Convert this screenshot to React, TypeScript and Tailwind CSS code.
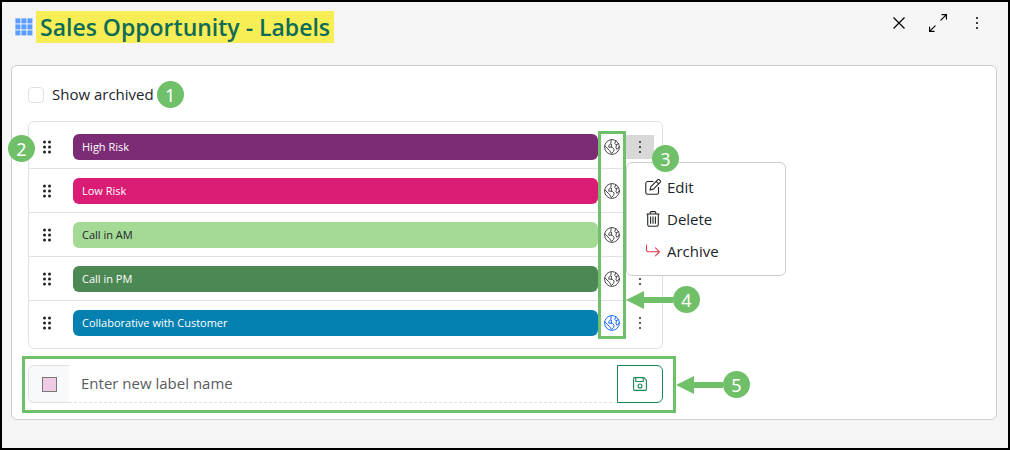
import { useState } from 'react'
import { BsArrowReturnRight, BsArrowsAngleExpand } from 'react-icons/bs'

const labels = [
  { name: 'High Risk', color: 'bg-[#7c2b75] text-white', shared: false },
  { name: 'Low Risk', color: 'bg-[#db1c74] text-white', shared: false },
  { name: 'Call in AM', color: 'bg-[#a5d996] text-[#212529]', shared: false },
  { name: 'Call in PM', color: 'bg-[#4b8854] text-white', shared: false },
  { name: 'Collaborative with Customer', color: 'bg-[#0481b1] text-white', shared: true },
]

function GridIcon() {
  return (
    <svg className="h-[18px] w-[18px] text-[#5a9dff]" viewBox="0 0 18 18" fill="currentColor">
      {[0, 6, 12].map((y) => [0, 6, 12].map((x) => (
        <rect key={`${x}-${y}`} x={x + 0.4} y={y + 0.4} width="5" height="5" />
      )))}
    </svg>
  )
}

function CloseIcon() {
  return (
    <svg className="h-3 w-3" viewBox="0 0 12 12" fill="none" stroke="currentColor" strokeWidth={1.2}>
      <path d="M.5.5l11 11M11.5.5l-11 11" />
    </svg>
  )
}

function DotsIcon() {
  return (
    <svg className="h-4 w-4" viewBox="0 0 16 16" fill="currentColor">
      <circle cx="8" cy="3" r="1" />
      <circle cx="8" cy="8" r="1" />
      <circle cx="8" cy="13" r="1" />
    </svg>
  )
}

function GlobeIcon({ className }: { className: string }) {
  return (
    <svg className={className} viewBox="0 0 16 16" fill="none" stroke="currentColor" strokeWidth={1} strokeLinecap="round" strokeLinejoin="round">
      <circle cx="8" cy="8" r="7.4" />
      <path d="M7 1v3.6L4.8 6.4v1.8h3.4l2 2-.6 2.2-2.2 2.2-1.6-2.8L1 7" />
      <path d="M7.4 5.4v2.8M11.8 2 10.6 4.4 12 5.6l2.6-.8M15 8.2l-2 2.2-1-1.6.4-3" />
    </svg>
  )
}

function GripIcon() {
  return (
    <svg className="h-4 w-4" viewBox="0 0 16 16" fill="currentColor">
      {[3, 8, 13].map((y) => (
        <g key={y}>
          <circle cx="5.5" cy={y} r="1.5" />
          <circle cx="10.5" cy={y} r="1.5" />
        </g>
      ))}
    </svg>
  )
}

function EditIcon() {
  return (
    <svg className="h-4 w-4" viewBox="0 0 16 16" fill="none" stroke="currentColor" strokeWidth={1.1} strokeLinejoin="round">
      <path d="M8.5 2.5h-6A1.8 1.8 0 0 0 .8 4.3v9.2a1.8 1.8 0 0 0 1.7 1.8h9.3a1.8 1.8 0 0 0 1.7-1.8V8" />
      <path d="M5 11l.9-3.4L12.7.8a1.2 1.2 0 0 1 1.7 0l.8.8a1.2 1.2 0 0 1 0 1.7L8.4 10.1 5 11zM11.2 2.3l2.5 2.5" />
    </svg>
  )
}

function TrashIcon() {
  return (
    <svg className="h-4 w-4" viewBox="0 0 16 16" fill="none" stroke="currentColor" strokeWidth={1.1}>
      <path d="M1.5 3h13M5.2 3V1.6a1 1 0 0 1 1-1h3.6a1 1 0 0 1 1 1V3M2.7 3v10.6a1.7 1.7 0 0 0 1.7 1.7h7.2a1.7 1.7 0 0 0 1.7-1.7V3M5.6 5.5v7.3M8 5.5v7.3M10.4 5.5v7.3" />
    </svg>
  )
}

function SaveIcon() {
  return (
    <svg className="h-3.5 w-3.5" viewBox="0 0 14 14" fill="none" stroke="currentColor" strokeWidth={1.1} strokeLinejoin="round">
      <path d="M1.5.6h9.3l2.6 2.6v9.3a.9.9 0 0 1-.9.9h-11a.9.9 0 0 1-.9-.9v-11a.9.9 0 0 1 .9-.9z" />
      <path d="M2.8.6v3.9h7.4V.6" />
      <circle cx="7" cy="9" r="2" />
    </svg>
  )
}

function Badge({ n }: { n: number }) {
  return (
    <span className="flex h-[27px] w-[27px] shrink-0 items-center justify-center rounded-full bg-[#6fc069] font-['Noto_Sans',sans-serif] text-[18px] leading-none text-white">
      {n}
    </span>
  )
}

function Callout({ n }: { n: number }) {
  return (
    <div className="flex items-center">
      <svg className="h-[18px] w-[47px]" viewBox="0 0 47 18" fill="#6fc069">
        <path d="M0 9 18 0v6h29v6H18v6z" />
      </svg>
      <Badge n={n} />
    </div>
  )
}

export default function App() {
  const [archived, setArchived] = useState(false)
  const [name, setName] = useState('')

  return (
    <div className="min-h-screen border-2 border-black bg-[#f5f5f5] px-[9px] pb-7 font-['Open_Sans',sans-serif] text-[15px] text-[#212529]">
      <header className="flex h-[63px] items-start justify-between pt-[9px] pr-3 pl-1">
        <div className="flex items-center">
          <GridIcon />
          <h1 className="ml-[3px] bg-[#f7ee55] px-1 text-[23px] leading-8 font-semibold text-[#0d6b57]">
            Sales Opportunity - Labels
          </h1>
        </div>
        <div className="flex items-center gap-[19px] pt-0.5 text-black">
          <button aria-label="Close" className="flex h-5 w-5 items-center justify-center">
            <CloseIcon />
          </button>
          <button aria-label="Expand" className="flex h-5 w-5 items-center justify-center">
            <BsArrowsAngleExpand className="h-[18px] w-[18px]" />
          </button>
          <button aria-label="More" className="flex h-5 w-5 items-center justify-center">
            <DotsIcon />
          </button>
        </div>
      </header>

      <main className="mr-0.5 rounded-md border border-[#ccc] bg-white p-4 pt-[15px]">
        <div className="flex items-center">
          <input
            id="archived"
            type="checkbox"
            checked={archived}
            onChange={(e) => setArchived(e.target.checked)}
            className="h-4 w-4 appearance-none rounded border border-[#dee2e6] bg-white checked:bg-[#198754]"
          />
          <label htmlFor="archived" className="mr-[3px] ml-2">Show archived</label>
          <Badge n={1} />
        </div>

        <div className="relative mt-[13px] w-full max-w-[635px]">
          <ul className="rounded-md border border-[#dee2e6] py-[3px]">
            {labels.map((label) => (
              <li key={label.name} className="flex h-11 items-center border-b border-[#dee2e6] pr-2 pl-2.5 last:border-b-0">
                <button aria-label="Move" className="flex w-4 justify-center">
                  <GripIcon />
                </button>
                <span className={`ml-[18px] h-[26px] flex-1 rounded-md px-[9px] text-[11px] leading-[26px] ${label.color}`}>
                  {label.name}
                </span>
                <span className="flex w-7 justify-center">
                  <GlobeIcon className={label.shared ? 'h-4 w-4 text-[#1a6dff]' : 'h-4 w-4 text-[#4a4a4a]'} />
                </span>
                <button
                  aria-label={`Actions for ${label.name}`}
                  className={label.name === 'High Risk' ? 'flex h-6 w-7 items-center justify-center bg-[#d8d8d8]' : 'flex h-6 w-7 items-center justify-center'}
                >
                  <DotsIcon />
                </button>
              </li>
            ))}
          </ul>

          <div className="absolute top-2.5 right-[37px] h-[208px] w-7 border-3 border-[#6fc069]" />

          <div className="absolute top-[41px] left-full -ml-[37px] w-40 rounded-md border border-[#ccc] bg-white py-2">
            <button className="flex h-8 w-full items-center gap-[6px] px-[18px]">
              <EditIcon />
              Edit
            </button>
            <button className="flex h-8 w-full items-center gap-[6px] px-[18px]">
              <TrashIcon />
              Delete
            </button>
            <button className="flex h-8 w-full items-center gap-[6px] px-[18px]">
              <BsArrowReturnRight className="h-4 w-4 text-[#dc3545]" />
              Archive
            </button>
          </div>

          <div className="absolute top-3.5 -left-5">
            <Badge n={2} />
          </div>
          <div className="absolute top-6 left-full -ml-[11px]">
            <Badge n={3} />
          </div>
          <div className="absolute top-[165px] left-full -ml-[37px]">
            <Callout n={4} />
          </div>
        </div>

        <div className="relative mt-4 w-full max-w-[635px]">
          <form className="flex h-[38px]" onSubmit={(e) => e.preventDefault()}>
            <div className="flex w-[41px] items-center justify-center rounded-l-md border border-r-0 border-[#dee2e6] bg-[#f8f9fa]">
              <button type="button" aria-label="Label colour" className="h-[15px] w-[15px] border border-[#777] bg-[#efcbe4]" />
            </div>
            <input
              aria-label="Label name"
              placeholder="Enter new label name"
              value={name}
              onChange={(e) => setName(e.target.value)}
              className="min-w-0 flex-1 border-b border-dashed border-[#dee2e6] px-3 outline-none placeholder:text-[#595c5f]"
            />
            <button aria-label="Save" className="flex w-[46px] items-center justify-center rounded-r-md border border-[#198754] text-[#198754]">
              <SaveIcon />
            </button>
          </form>
          <div className="pointer-events-none absolute -top-[9px] -right-[13px] -bottom-2.5 -left-[6px] border-3 border-[#6fc069]" />
          <div className="absolute top-[6px] left-full ml-[13px]">
            <Callout n={5} />
          </div>
        </div>
      </main>
    </div>
  )
}
